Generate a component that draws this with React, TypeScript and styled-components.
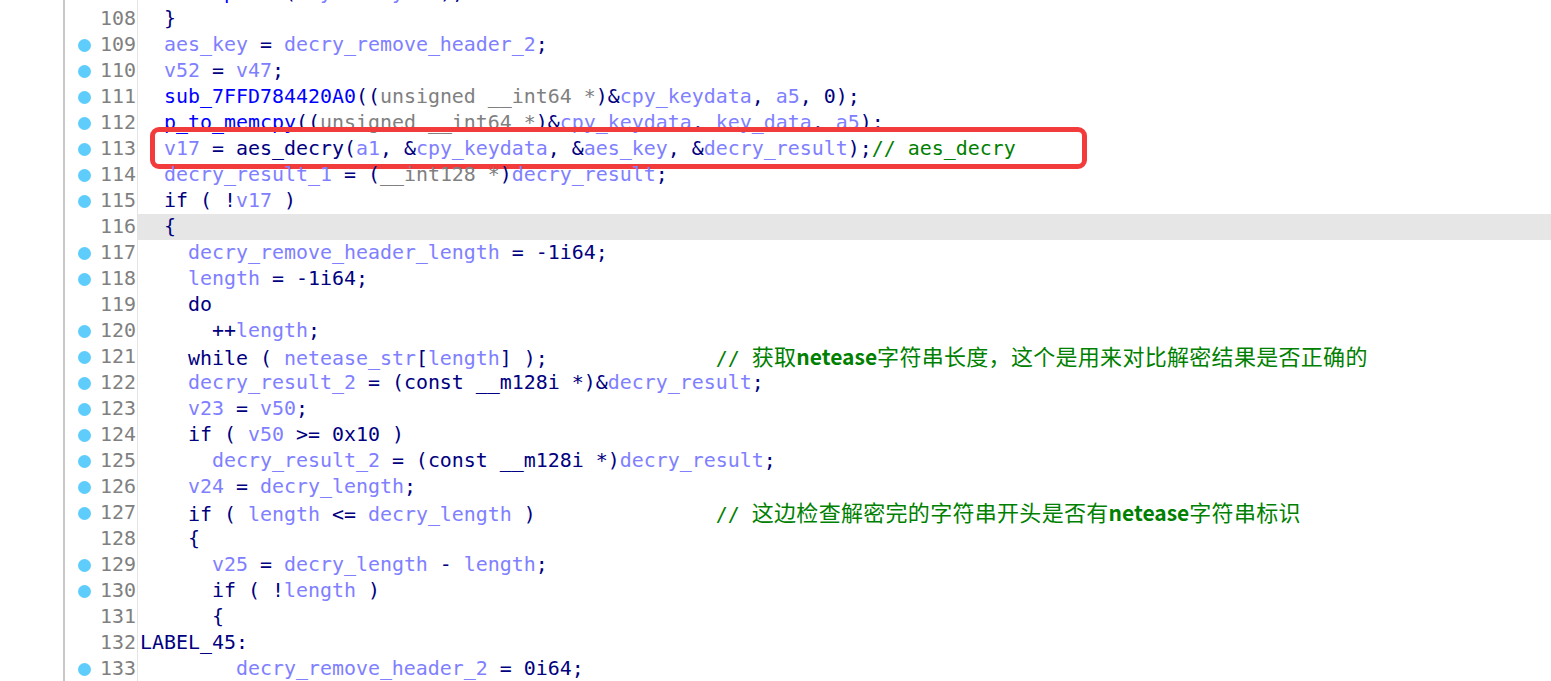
import React from "react";
import styled, { createGlobalStyle } from "styled-components";

const GlobalStyle = createGlobalStyle`
  html, body { margin: 0; padding: 0; background: #ffffff; overflow: hidden; }
  #root { width: 1551px; height: 681px; }
`;

type Kind = "n" | "v" | "f" | "t" | "c";
type Tok = [Kind, string];
type Line = { no: number; dot: boolean; toks: Tok[]; cjk?: React.ReactNode; hl?: boolean; box?: boolean };

const COLORS: Record<Kind, string> = {
  n: "#000080",
  v: "#8080ff",
  f: "#0000ff",
  t: "#808080",
  c: "#008000",
};

const Page = styled.div`
  display: flex;
  width: 1551px;
  height: 681px;
  overflow: hidden;
  background: #ffffff;
`;

const LeftSpace = styled.div`
  width: 63px;
  flex: none;
`;

const Editor = styled.div`
  flex: 1;
  border-left: 2px solid #c8c8c8;
  overflow: hidden;
`;

const Lines = styled.div`
  margin-top: -20px;
  display: flex;
  flex-direction: column;
`;

const Row = styled.div`
  display: flex;
  height: 26px;
  flex: none;
`;

const Gutter = styled.div`
  box-sizing: border-box;
  width: 73px;
  flex: none;
  border-right: 1px solid #e4e4e4;
  display: flex;
  align-items: center;
  justify-content: space-between;
  padding: 0 1px 0 13px;
`;

const Dot = styled.span<{ $on: boolean }>`
  width: 13px;
  height: 13px;
  border-radius: 50%;
  background: ${(p) => (p.$on ? "#5fcdfc" : "transparent")};
  flex: none;
`;

const LineNo = styled.span`
  font-family: "DejaVu Sans Mono", "Liberation Mono", monospace;
  font-size: 19.93px;
  line-height: 26px;
  color: #808080;
`;

const Code = styled.div<{ $hl?: boolean }>`
  position: relative;
  flex: 1;
  height: 26px;
  padding-left: 2px;
  white-space: pre;
  font-family: "DejaVu Sans Mono", "Liberation Mono", monospace;
  font-size: 19.93px;
  line-height: 26px;
  background: ${(p) => (p.$hl ? "#e6e6e6" : "transparent")};
`;

const T = styled.span<{ $k: Kind }>`
  color: ${(p) => COLORS[p.$k]};
`;

const Cjk = styled.span`
  font-family: "Noto Sans CJK SC", sans-serif;
  font-size: 22px;
  line-height: 1;
  letter-spacing: 0.3px;
  color: #008000;
`;

const Strong = styled.span`
  font-weight: 700;
  letter-spacing: 0;
  font-size: 21px;
`;

const RedBox = styled.div`
  position: absolute;
  left: 12px;
  top: -9px;
  width: 937px;
  height: 42px;
  box-sizing: border-box;
  border: 5px solid #f23c3c;
  border-radius: 9px;
  pointer-events: none;
`;

const sp = (n: number) => " ".repeat(n);

const lines: Line[] = [
  { no: 107, dot: true, toks: [["n", "  "], ["f", "cleanpwork"], ["n", "("], ["v", "keyrawkeylen"], ["n", ");"]] },
  { no: 108, dot: false, toks: [["n", "  }"]] },
  { no: 109, dot: true, toks: [["n", "  "], ["v", "aes_key"], ["n", " = "], ["v", "decry_remove_header_2"], ["n", ";"]] },
  { no: 110, dot: true, toks: [["n", "  "], ["v", "v52"], ["n", " = "], ["v", "v47"], ["n", ";"]] },
  {
    no: 111,
    dot: true,
    toks: [["n", "  "], ["f", "sub_7FFD784420A0"], ["n", "(("], ["t", "unsigned __int64 *"], ["n", ")&"], ["v", "cpy_keydata"], ["n", ", "], ["v", "a5"], ["n", ", 0);"]],
  },
  {
    no: 112,
    dot: true,
    toks: [["n", "  "], ["f", "p_to_memcpy"], ["n", "(("], ["t", "unsigned __int64 *"], ["n", ")&"], ["v", "cpy_keydata"], ["n", ", "], ["v", "key_data"], ["n", ", "], ["v", "a5"], ["n", ");"]],
  },
  {
    no: 113,
    dot: true,
    box: true,
    toks: [
      ["n", "  "], ["v", "v17"], ["n", " = aes_decry("], ["v", "a1"], ["n", ", &"], ["v", "cpy_keydata"], ["n", ", &"], ["v", "aes_key"], ["n", ", &"], ["v", "decry_result"], ["n", ");"], ["c", "// aes_decry"],
    ],
  },
  { no: 114, dot: true, toks: [["n", "  "], ["v", "decry_result_1"], ["n", " = ("], ["t", "__int128 *"], ["n", ")"], ["v", "decry_result"], ["n", ";"]] },
  { no: 115, dot: true, toks: [["n", "  if ( !"], ["v", "v17"], ["n", " )"]] },
  { no: 116, dot: false, hl: true, toks: [["n", "  {"]] },
  { no: 117, dot: true, toks: [["n", "    "], ["v", "decry_remove_header_length"], ["n", " = -1i64;"]] },
  { no: 118, dot: true, toks: [["n", "    "], ["v", "length"], ["n", " = -1i64;"]] },
  { no: 119, dot: false, toks: [["n", "    do"]] },
  { no: 120, dot: true, toks: [["n", "      ++"], ["v", "length"], ["n", ";"]] },
  {
    no: 121,
    dot: true,
    toks: [["n", "    while ( "], ["v", "netease_str"], ["n", "["], ["v", "length"], ["n", "] );" + sp(14)], ["c", "// "]],
    cjk: (
      <>
        获取<Strong>netease</Strong>字符串长度，这个是用来对比解密结果是否正确的
      </>
    ),
  },
  { no: 122, dot: true, toks: [["n", "    "], ["v", "decry_result_2"], ["n", " = ("], ["n", "const __m128i *"], ["n", ")&"], ["v", "decry_result"], ["n", ";"]] },
  { no: 123, dot: true, toks: [["n", "    "], ["v", "v23"], ["n", " = "], ["v", "v50"], ["n", ";"]] },
  { no: 124, dot: true, toks: [["n", "    if ( "], ["v", "v50"], ["n", " >= 0x10 )"]] },
  { no: 125, dot: true, toks: [["n", "      "], ["v", "decry_result_2"], ["n", " = ("], ["n", "const __m128i *"], ["n", ")"], ["v", "decry_result"], ["n", ";"]] },
  { no: 126, dot: true, toks: [["n", "    "], ["v", "v24"], ["n", " = "], ["v", "decry_length"], ["n", ";"]] },
  {
    no: 127,
    dot: true,
    toks: [["n", "    if ( "], ["v", "length"], ["n", " <= "], ["v", "decry_length"], ["n", " )" + sp(15)], ["c", "// "]],
    cjk: (
      <>
        这边检查解密完的字符串开头是否有<Strong>netease</Strong>字符串标识
      </>
    ),
  },
  { no: 128, dot: false, toks: [["n", "    {"]] },
  { no: 129, dot: true, toks: [["n", "      "], ["v", "v25"], ["n", " = "], ["v", "decry_length"], ["n", " - "], ["v", "length"], ["n", ";"]] },
  { no: 130, dot: true, toks: [["n", "      if ( !"], ["v", "length"], ["n", " )"]] },
  { no: 131, dot: false, toks: [["n", "      {"]] },
  { no: 132, dot: false, toks: [["n", "LABEL_45:"]] },
  { no: 133, dot: true, toks: [["n", "        "], ["v", "decry_remove_header_2"], ["n", " = 0i64;"]] },
];

export default function App() {
  return (
    <>
      <GlobalStyle />
      <Page>
        <LeftSpace />
        <Editor>
          <Lines>
            {lines.map((l) => (
              <Row key={l.no}>
                <Gutter>
                  <Dot $on={l.dot} />
                  <LineNo>{l.no}</LineNo>
                </Gutter>
                <Code $hl={l.hl}>
                  {l.toks.map((t, i) => (
                    <T key={i} $k={t[0]}>
                      {t[1]}
                    </T>
                  ))}
                  {l.cjk && <Cjk>{l.cjk}</Cjk>}
                  {l.box && <RedBox />}
                </Code>
              </Row>
            ))}
          </Lines>
        </Editor>
      </Page>
    </>
  );
}
